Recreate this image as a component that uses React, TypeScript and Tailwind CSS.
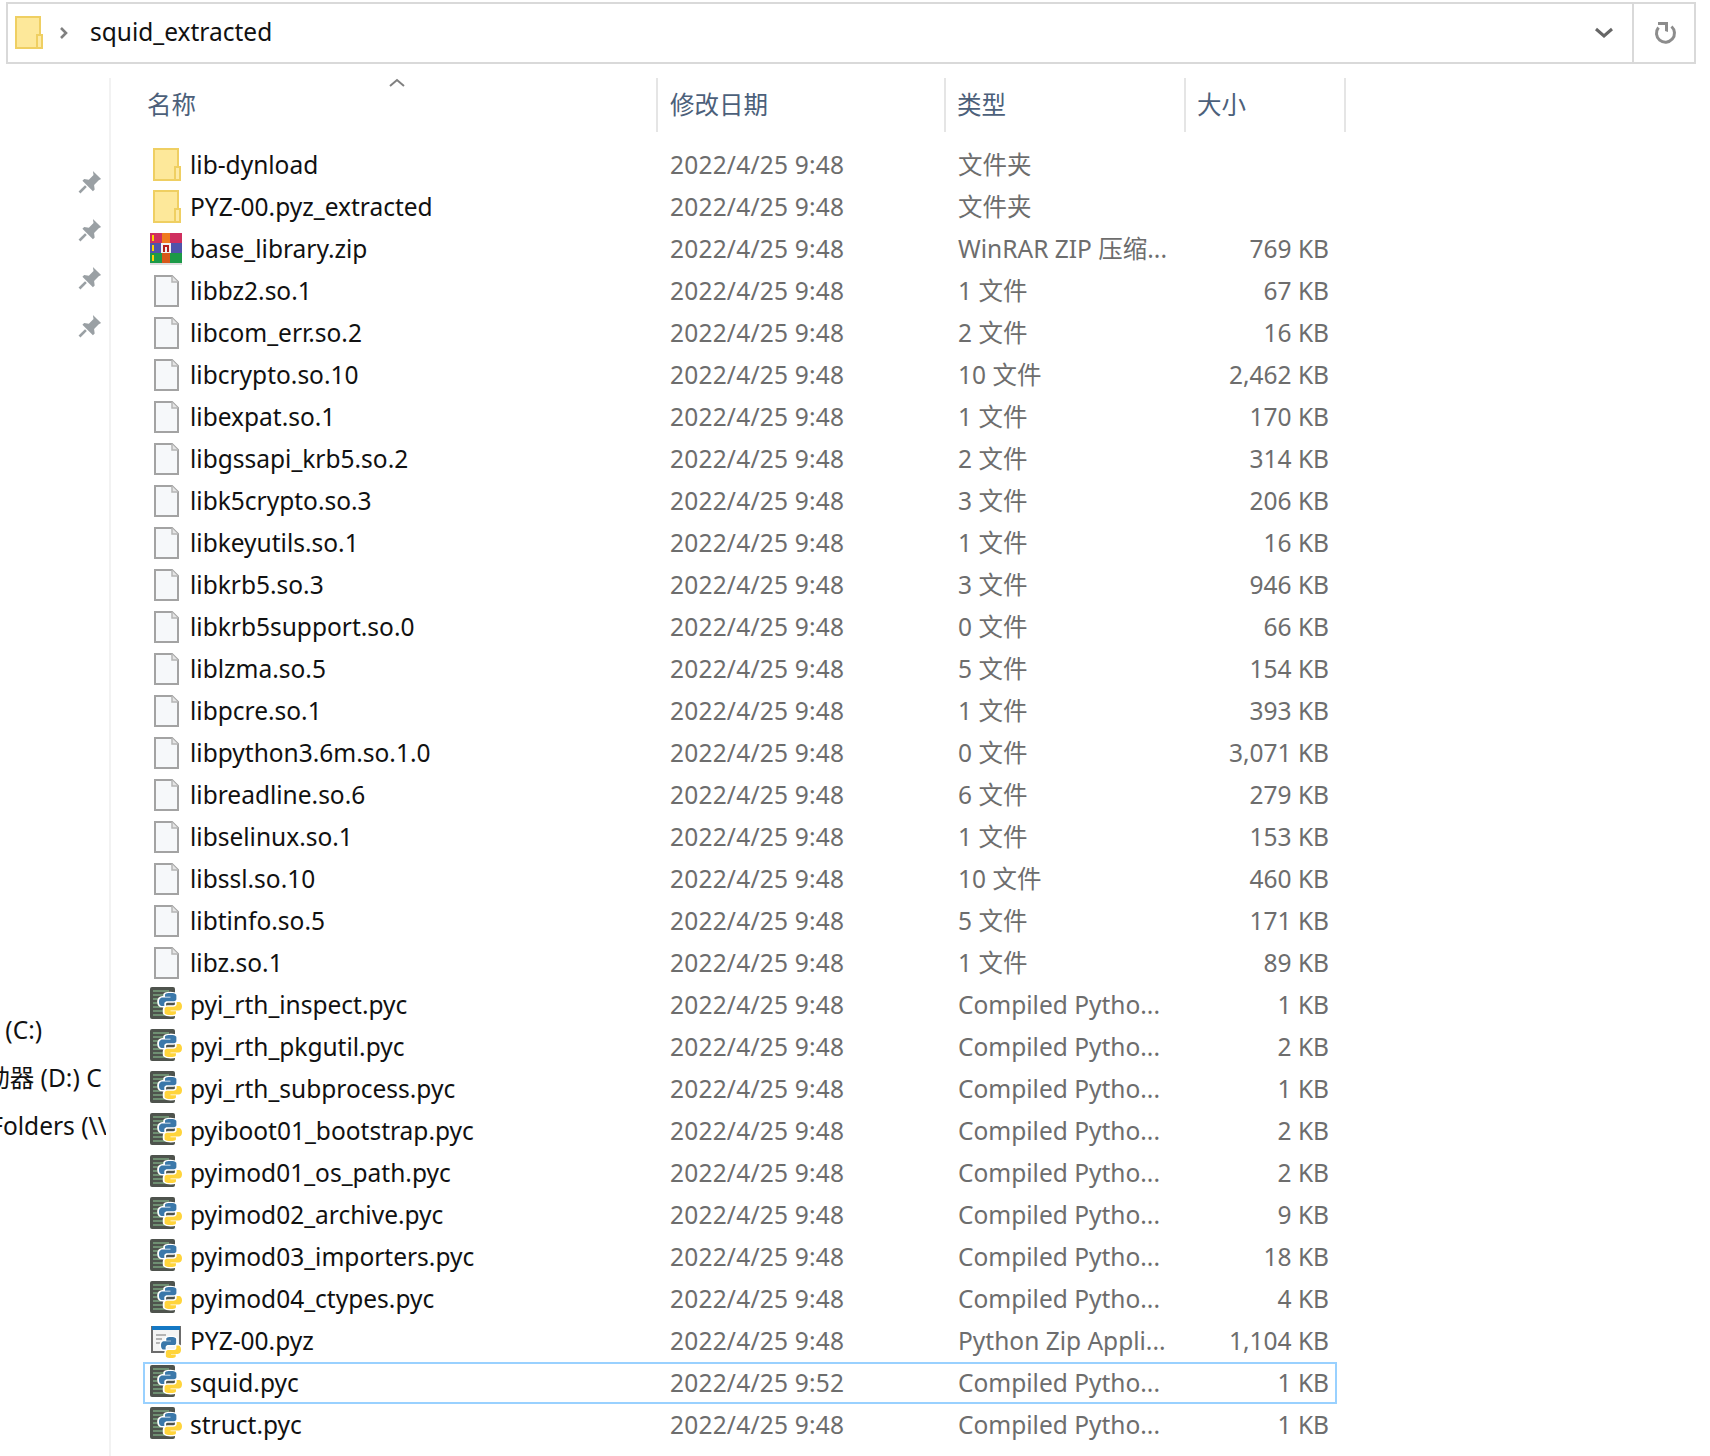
import React from "react";

type Kind = "folder" | "zip" | "file" | "pyc" | "pyz";
type Row = { n: string; t: string; s: string; k: Kind; d?: string; sel?: boolean };

const f = (n: string, t: string, s: string): Row => ({ n, t, s, k: "file" });
const p = (n: string, s: string): Row => ({ n, t: "Compiled Pytho...", s, k: "pyc" });

const rows: Row[] = [
  { n: "lib-dynload", t: "文件夹", s: "", k: "folder" },
  { n: "PYZ-00.pyz_extracted", t: "文件夹", s: "", k: "folder" },
  { n: "base_library.zip", t: "WinRAR ZIP 压缩...", s: "769 KB", k: "zip" },
  f("libbz2.so.1", "1 文件", "67 KB"),
  f("libcom_err.so.2", "2 文件", "16 KB"),
  f("libcrypto.so.10", "10 文件", "2,462 KB"),
  f("libexpat.so.1", "1 文件", "170 KB"),
  f("libgssapi_krb5.so.2", "2 文件", "314 KB"),
  f("libk5crypto.so.3", "3 文件", "206 KB"),
  f("libkeyutils.so.1", "1 文件", "16 KB"),
  f("libkrb5.so.3", "3 文件", "946 KB"),
  f("libkrb5support.so.0", "0 文件", "66 KB"),
  f("liblzma.so.5", "5 文件", "154 KB"),
  f("libpcre.so.1", "1 文件", "393 KB"),
  f("libpython3.6m.so.1.0", "0 文件", "3,071 KB"),
  f("libreadline.so.6", "6 文件", "279 KB"),
  f("libselinux.so.1", "1 文件", "153 KB"),
  f("libssl.so.10", "10 文件", "460 KB"),
  f("libtinfo.so.5", "5 文件", "171 KB"),
  f("libz.so.1", "1 文件", "89 KB"),
  p("pyi_rth_inspect.pyc", "1 KB"),
  p("pyi_rth_pkgutil.pyc", "2 KB"),
  p("pyi_rth_subprocess.pyc", "1 KB"),
  p("pyiboot01_bootstrap.pyc", "2 KB"),
  p("pyimod01_os_path.pyc", "2 KB"),
  p("pyimod02_archive.pyc", "9 KB"),
  p("pyimod03_importers.pyc", "18 KB"),
  p("pyimod04_ctypes.pyc", "4 KB"),
  { n: "PYZ-00.pyz", t: "Python Zip Appli...", s: "1,104 KB", k: "pyz" },
  { n: "squid.pyc", t: "Compiled Pytho...", s: "1 KB", k: "pyc", d: "2022/4/25 9:52", sel: true },
  p("struct.pyc", "1 KB"),
];

const BLUE = "M11.9 2C8 2 8.2 3.7 8.2 3.7V5.5h3.8V6H6.7S4 5.7 4 9.9s2.3 4 2.3 4h1.4v-2s-.1-2.3 2.3-2.3h3.9s2.2 0 2.2-2.1V4.1S16.4 2 11.9 2z";

function Py({ x, y, sx, sy }: { x: number; y: number; sx: number; sy: number }) {
  return (
    <g transform={`translate(${x} ${y}) scale(${sx} ${sy})`}>
      <path d={BLUE} fill="#fff" stroke="#fff" strokeWidth="2.5" />
      <path d={BLUE} fill="#fff" stroke="#fff" strokeWidth="2.5" transform="rotate(180 12 12)" />
      <path d={BLUE} fill="#3b78aa" />
      <path d={BLUE} fill="#ffd43b" transform="rotate(180 12 12)" />
    </g>
  );
}

function FolderShape() {
  return (
    <>
      <rect x="6" y="2" width="24" height="31" fill="#fde89a" stroke="#efcf62" strokeWidth="2" />
      <rect x="27" y="20" width="5" height="13" fill="#fdeaa5" stroke="#efcf62" strokeWidth="2" />
    </>
  );
}

function Icon({ k }: { k: Kind }) {
  return (
    <svg width="36" height="36" viewBox="0 0 36 36" className="shrink-0">
      {k === "folder" && <FolderShape />}
      {k === "file" && (
        <>
          <path d="M7 3h17l6 6v24H7z" fill="#f6f8fa" stroke="#a3a3a3" strokeWidth="2" />
          <path d="M24 3v6h6" fill="#e4e4e4" stroke="#b5b5b5" strokeWidth="1.5" />
        </>
      )}
      {k === "zip" && (
        <>
          <rect x="2" y="2" width="32" height="10" fill="#cf2f5f" />
          <rect x="2" y="12" width="32" height="10" fill="#5053ab" />
          <rect x="2" y="22" width="32" height="10" fill="#1c9a48" />
          <rect x="2" y="32" width="32" height="2" fill="#dcdcdc" />
          <rect x="4" y="4" width="2" height="6" fill="#ffd400" />
          <rect x="4" y="14" width="2" height="6" fill="#ffd400" />
          <rect x="4" y="24" width="2" height="6" fill="#ffd400" />
          <rect x="14" y="2" width="8" height="10" fill="#ef7a1f" />
          <rect x="14" y="22" width="8" height="10" fill="#d8581a" />
          <rect x="13" y="12" width="10" height="10" fill="#f2f2f2" />
          <path d="M16 21v-6h4v6" fill="none" stroke="#b41e1e" strokeWidth="2" />
        </>
      )}
      {k === "pyc" && (
        <>
          <rect x="2" y="0" width="25" height="32" rx="2" fill="#4e534d" />
          <path d="M5 4h16M5 8h11M5 12h8M5 16h7M5 20h8M5 24h11M5 28h16" stroke="#6f8f72" strokeWidth="2" />
          <Py x={5.2} y={3.8} sx={1.44} sy={1.1} />
        </>
      )}
      {k === "pyz" && (
        <>
          <rect x="4" y="4" width="28" height="25" fill="#f4f4f4" stroke="#6c6c6c" strokeWidth="2" />
          <rect x="4" y="3" width="28" height="4" fill="#1478c4" />
          <path d="M8 12h10M8 16h6M8 20h5" stroke="#b4b4b4" strokeWidth="2" />
          <Py x={8} y={12} sx={1.25} sy={1.05} />
        </>
      )}
    </svg>
  );
}

function Pin() {
  return (
    <svg width="28" height="28" viewBox="0 0 24 24">
      <path d="M14.5 2.5l7 7-2 1-4 4 .5 4-1.5 1.5-9-9 1.5-1.5 4 .5 4-4z" fill="#9aa0a4" />
      <path d="M8.5 15.5L3 21" stroke="#9aa0a4" strokeWidth="2.2" />
    </svg>
  );
}

const stack = "font-['Noto_Sans','Noto_Sans_CJK_SC',sans-serif]";

export default function App() {
  return (
    <div className={`w-[1710px] h-[1456px] overflow-hidden bg-white pt-[2px] text-[24.5px] ${stack}`}>
      <div className="ml-[6px] w-[1690px] h-[62px] border-2 border-[#d9d9d9] flex items-center">
        <svg width="36" height="36" viewBox="0 0 36 36" className="ml-[2px] shrink-0"><FolderShape /></svg>
        <svg width="12" height="14" viewBox="0 0 12 14" className="ml-[12px]"><path d="M3 2l5 5-5 5" fill="none" stroke="#808080" strokeWidth="2.6" /></svg>
        <span className="ml-[20px] text-[#111] -mt-[2px]">squid_extracted</span>
        <div className="ml-auto flex items-center h-full">
          <svg width="20" height="12" viewBox="0 0 20 12" className="mr-[18px]"><path d="M2 2l8 7 8-7" fill="none" stroke="#666" strokeWidth="3" /></svg>
          <div className="h-full w-[62px] border-l-2 border-[#d9d9d9] flex items-center justify-center">
            <svg width="24" height="26" viewBox="0 0 24 26" className="ml-[4px]">
              <path d="M4.5 7.5a9 9 0 1 0 13 -1" fill="none" stroke="#8c8c8c" strokeWidth="3" />
              <path d="M4 2h10v10l-3 -1v-6h-7z" fill="#8c8c8c" />
            </svg>
          </div>
        </div>
      </div>
      <div className="flex mt-[14px]">
        <aside className="w-[111px] h-[1378px] shrink-0 overflow-hidden border-r-2 border-[#f2f2f2] pt-[80px]">
          {[0, 1, 2, 3].map((i) => (
            <div key={i} className="h-[48px] flex items-center pl-[76px]"><Pin /></div>
          ))}
          <div className="mt-[656px] w-[106px] overflow-hidden text-[#111] whitespace-nowrap">
            <div className="h-[48px] flex items-center -ml-[99px]">本地磁盘 (C:)</div>
            <div className="h-[48px] flex items-center -ml-[79px]">CD 驱动器 (D:) C</div>
            <div className="h-[48px] flex items-center -ml-[97px]">Shared Folders (\\vmware</div>
          </div>
        </aside>
        <main className="pl-[32px] min-w-0">
          <div className="relative grid grid-cols-[515px_288px_240px_160px] h-[54px] text-[#4c607a]">
            <div className="border-r-2 border-[#e5e5e5] pl-[4px] flex items-center">名称</div>
            <div className="border-r-2 border-[#e5e5e5] pl-[12px] flex items-center">修改日期</div>
            <div className="border-r-2 border-[#e5e5e5] pl-[11px] flex items-center">类型</div>
            <div className="border-r-2 border-[#e5e5e5] pl-[11px] flex items-center">大小</div>
            <svg width="18" height="10" viewBox="0 0 18 10" className="absolute left-[245px] top-0"><path d="M2 8l7-6 7 6" fill="none" stroke="#808080" strokeWidth="2" /></svg>
          </div>
          <div className="mt-[12px]">
            {rows.map((r) => (
              <div
                key={r.n}
                className={`grid grid-cols-[516px_287px_240px_147px] w-[1194px] h-[42px] items-center border-2 ${r.sel ? "border-[#99d1ff]" : "border-transparent"}`}
              >
                <div className="flex items-center gap-[6px] pl-[3px] text-[#111]">
                  <Icon k={r.k} />
                  <span className="whitespace-nowrap">{r.n}</span>
                </div>
                <div className="pl-[9px] text-[#6d6d6d] whitespace-nowrap tracking-[0.2px]">{r.d ?? "2022/4/25 9:48"}</div>
                <div className="pl-[10px] text-[#6d6d6d] whitespace-nowrap">{r.t}</div>
                <div className="pr-[6px] text-right text-[#6d6d6d] whitespace-nowrap">{r.s}</div>
              </div>
            ))}
          </div>
        </main>
      </div>
    </div>
  );
}
